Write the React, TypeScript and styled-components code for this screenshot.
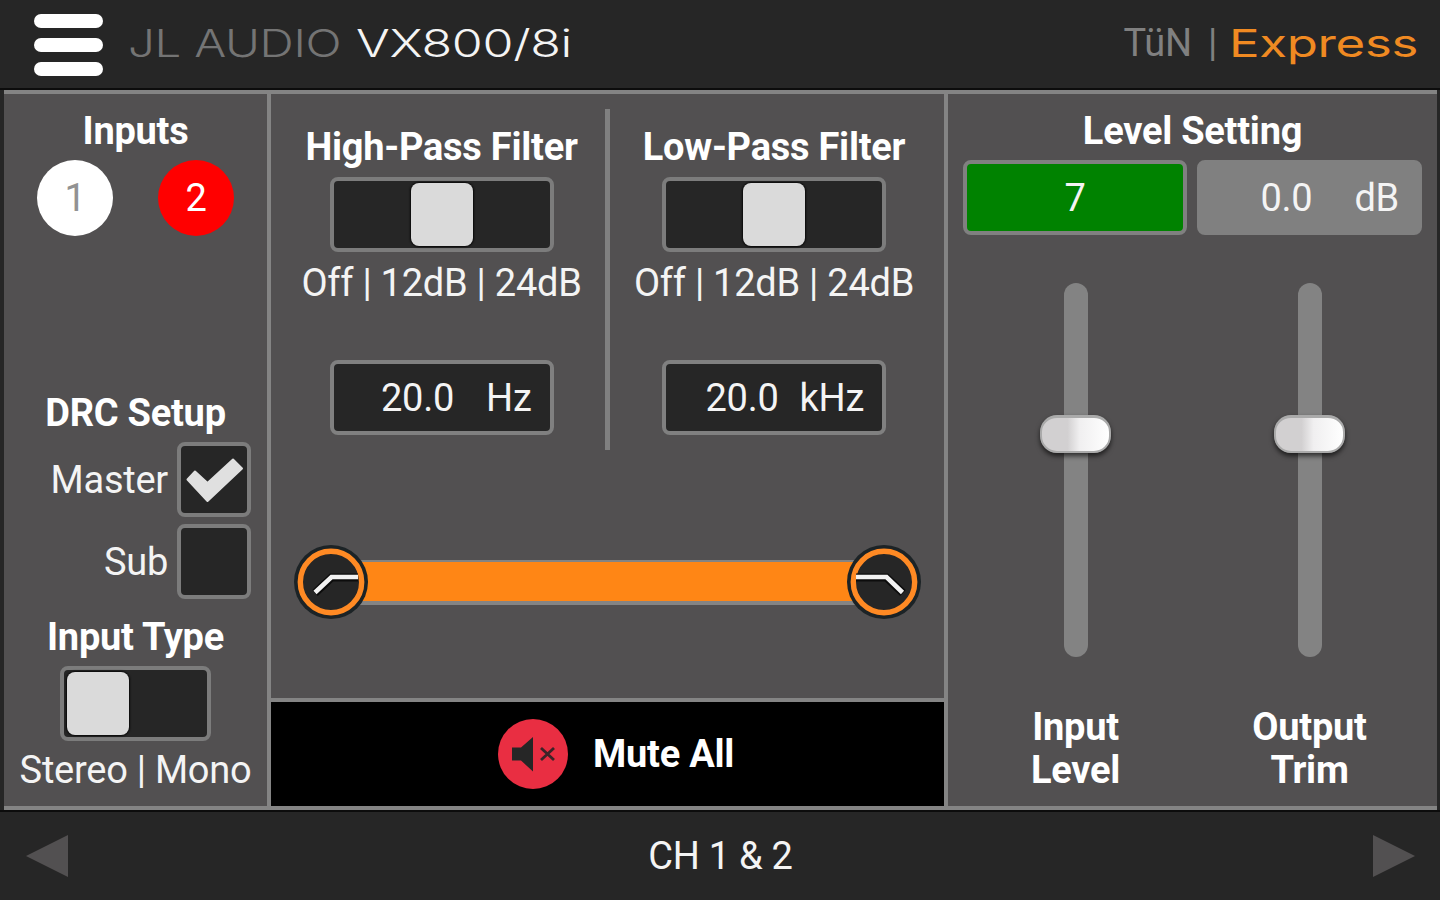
import styled, { createGlobalStyle } from "styled-components";

const GlobalStyle = createGlobalStyle`
  * {
    box-sizing: border-box;
  }

  body {
    margin: 0;
    background: #262626;
    color: #f4f4f4;
    font-family: Roboto, "Liberation Sans", sans-serif;
    font-size: 38px;
    line-height: 44px;
    letter-spacing: -0.25px;
  }
`;

const Screen = styled.div`
  display: grid;
  grid-template-rows: 90px 720px 90px;
  width: 1440px;
  height: 900px;
  overflow: hidden;
  white-space: nowrap;
`;

const Header = styled.header`
  display: flex;
  align-items: flex-start;
  padding: 14px 23px 0 34px;
  border-bottom: 2px solid #0c0c0c;
`;

const MenuButton = styled.div`
  display: grid;
  gap: 10px;
  width: 69px;
  margin-right: 25px;
`;

const MenuBar = styled.div`
  height: 14px;
  border-radius: 7px;
  background: #fff;
`;

const Wordmark = styled.div<{ $width: number; $color: string; $weight?: number }>`
  width: ${(p) => p.$width}px;
  margin-top: 7px;
  color: ${(p) => p.$color};
  font-family: Inter, sans-serif;
  font-weight: ${(p) => p.$weight ?? 300};
`;

const Stretch = styled.span<{ $scale: number }>`
  display: inline-block;
  transform: scaleX(${(p) => p.$scale});
  transform-origin: left center;
`;

const Mode = styled.div`
  margin: 7px 12px 0 auto;
  color: #808080;
  word-spacing: 7px;
`;

const Main = styled.main`
  display: grid;
  grid-template-columns: 263px 681px 489px;
  margin: 0 3px 0 4px;
  border: solid #848484;
  border-width: 4px 0;
  background: #525051;
`;

const Panel = styled.section`
  display: flex;
  flex-direction: column;
  align-items: center;
`;

const InputsPanel = styled(Panel)`
  padding-top: 15px;
`;

const FilterPanel = styled(Panel)`
  border: solid #848484;
  border-width: 0 4px;
`;

const LevelPanel = styled(Panel)`
  padding-top: 15px;
`;

const Title = styled.div`
  font-weight: 700;
  color: #fff;
  text-align: center;
`;

const Channels = styled.div`
  display: flex;
  gap: 45px;
  margin: 7px 0 155px;
`;

const Channel = styled.div<{ $bg: string; $color: string }>`
  width: 76px;
  height: 76px;
  border-radius: 50%;
  background: ${(p) => p.$bg};
  color: ${(p) => p.$color};
  line-height: 76px;
  text-align: center;
`;

const CheckRow = styled.label`
  display: flex;
  align-items: center;
  align-self: flex-end;
  gap: 9px;
  margin: 7px 16px 0 0;

  & + & {
    margin-bottom: 16px;
  }
`;

const CheckBox = styled.div`
  width: 74px;
  height: 75px;
  padding: 1px;
  border: 4px solid #7c7c7c;
  border-radius: 8px;
  background: #262626;

  svg {
    display: block;
  }
`;

const Switch = styled.div<{ $width: number; $position: string }>`
  display: flex;
  justify-content: ${(p) => p.$position};
  width: ${(p) => p.$width}px;
  height: 75px;
  margin: 7px 0;
  padding: 2px 3px;
  border: 4px solid #7c7c7c;
  border-radius: 8px;
  background: #262626;
`;

const FilterSwitch = styled(Switch)`
  margin: 8px 0 9px;
`;

const Knob = styled.div`
  width: 62px;
  height: 63px;
  border-radius: 8px;
  background: #dadada;
  box-shadow: 0 0 2px 1px #080808;
`;

const Filters = styled.div`
  display: grid;
  grid-template-columns: 334px 5px 334px;
  height: 604px;
  padding-top: 15px;
`;

const Divider = styled.div`
  height: 341px;
  background: #808080;
`;

const Filter = styled.div<{ $left?: number; $right?: number }>`
  display: flex;
  flex-direction: column;
  align-items: center;
  padding: 16px ${(p) => p.$right ?? 0}px 0 ${(p) => p.$left ?? 0}px;
`;

const Field = styled.div<{ $bg?: string; $width?: number; $end?: number }>`
  display: flex;
  justify-content: ${(p) => (p.$end ? "flex-end" : "center")};
  width: ${(p) => p.$width ?? 224}px;
  height: 75px;
  padding-right: ${(p) => p.$end ?? 0}px;
  border: 4px solid #808080;
  border-radius: 8px;
  background: ${(p) => p.$bg ?? "#262626"};
  line-height: 68px;
`;

const FilterField = styled(Field)`
  margin-top: 55px;
`;

const Unit = styled.span<{ $gap: number }>`
  margin-left: ${(p) => p.$gap}px;
`;

const Range = styled.div`
  display: flex;
  justify-content: space-between;
  align-items: center;
  width: 627px;
  height: 74px;
  margin: -153px 1px 79px 0;
`;

const RangeFill = styled.div`
  flex: 1;
  height: 45px;
  margin: 0 -8px;
  border: solid #848484;
  border-width: 2px 0 4px;
  background: #ff8615;
`;

const Handle = styled.svg`
  position: relative;
  flex: none;
`;

const MuteBar = styled.div`
  display: flex;
  align-items: center;
  width: 673px;
  height: 108px;
  padding-left: 227px;
  border-top: 4px solid #848484;
  background: #000;
`;

const MuteIcon = styled.svg`
  margin-right: 25px;
`;

const Readouts = styled.div`
  display: flex;
  gap: 10px;
  margin: 7px 0 48px;
`;

const Sliders = styled.div`
  display: grid;
  grid-template-columns: 234px 234px;
`;

const Slider = styled.div`
  display: flex;
  flex-direction: column;
  align-items: center;
`;

const Track = styled.div`
  display: flex;
  justify-content: center;
  width: 24px;
  height: 374px;
  margin-bottom: 49px;
  padding-top: 132px;
  border-radius: 12px;
  background: #838383;
`;

const Thumb = styled.div`
  flex: none;
  width: 71px;
  height: 38px;
  border: 2px solid #aaa;
  border-top-width: 3px;
  border-radius: 17px;
  background: linear-gradient(90deg, #d2d0d1 0 38%, #f0eff0 56%, #fff);
  box-shadow: 0 3px 5px rgba(0, 0, 0, 0.65);
`;

const Label = styled(Title)`
  line-height: 43px;
`;

const Footer = styled.footer`
  display: flex;
  justify-content: space-between;
  align-items: center;
  padding: 0 25px 0 26px;
  border-top: 2px solid #0c0c0c;
`;

const HighPassHandle = () => (
  <Handle width="74" height="74" viewBox="0 0 74 74">
    <circle cx="37" cy="37" r="37" fill="#1c2326" />
    <circle cx="37" cy="37" r="30.7" fill="#262626" stroke="#ff8a24" strokeWidth="5.4" />
    <path d="M21 48L37.5 32.5H64" fill="none" stroke="#0c0c0c" strokeWidth="8" />
    <path d="M21 47.5L37.5 32H64" fill="none" stroke="#f2f2f2" strokeWidth="4.6" />
  </Handle>
);

const LowPassHandle = () => (
  <Handle width="74" height="74" viewBox="0 0 74 74">
    <circle cx="37" cy="37" r="37" fill="#1c2326" />
    <circle cx="37" cy="37" r="30.7" fill="#262626" stroke="#ff8a24" strokeWidth="5.4" />
    <path d="M9 32.5H39.5L56 48" fill="none" stroke="#0c0c0c" strokeWidth="8" />
    <path d="M9 32H39.5L55.5 47.5" fill="none" stroke="#f2f2f2" strokeWidth="4.6" />
  </Handle>
);

const App = () => (
  <>
    <GlobalStyle />
    <Screen>
      <Header>
        <MenuButton>
          <MenuBar />
          <MenuBar />
          <MenuBar />
        </MenuButton>
        <Wordmark $width={228} $color="#747474">
          <Stretch $scale={1.25}>JL AUDIO</Stretch>
        </Wordmark>
        <Wordmark $width={214} $color="#f4f4f4">
          <Stretch $scale={1.32}>VX800/8i</Stretch>
        </Wordmark>
        <Mode>TüN |</Mode>
        <Wordmark $width={188} $color="#f08a22" $weight={400}>
          <Stretch $scale={1.34}>Express</Stretch>
        </Wordmark>
      </Header>

      <Main>
        <InputsPanel>
          <Title>Inputs</Title>
          <Channels>
            <Channel $bg="#fff" $color="#929292">1</Channel>
            <Channel $bg="#f00" $color="#fff">2</Channel>
          </Channels>
          <Title>DRC Setup</Title>
          <CheckRow>
            Master
            <CheckBox>
              <svg width="64" height="65" viewBox="0 0 64 65">
                <path
                  d="M5.5 32.5L13 24.5L25.5 36L51 12.5L60 21.5L25.5 54Z"
                  fill="#e0e0e0"
                  stroke="#e0e0e0"
                  strokeWidth="2"
                  strokeLinejoin="round"
                />
              </svg>
            </CheckBox>
          </CheckRow>
          <CheckRow>
            Sub
            <CheckBox />
          </CheckRow>
          <Title>Input Type</Title>
          <Switch $width={151} $position="flex-start">
            <Knob />
          </Switch>
          <div>Stereo | Mono</div>
        </InputsPanel>

        <FilterPanel>
          <Filters>
            <Filter $left={7}>
              <Title>High-Pass Filter</Title>
              <FilterSwitch $width={224} $position="center">
                <Knob />
              </FilterSwitch>
              <div>Off | 12dB | 24dB</div>
              <FilterField $end={18}>
                20.0<Unit $gap={32}>Hz</Unit>
              </FilterField>
            </Filter>
            <Divider />
            <Filter $right={6}>
              <Title>Low-Pass Filter</Title>
              <FilterSwitch $width={224} $position="center">
                <Knob />
              </FilterSwitch>
              <div>Off | 12dB | 24dB</div>
              <FilterField $end={18}>
                20.0<Unit $gap={21}>kHz</Unit>
              </FilterField>
            </Filter>
          </Filters>
          <Range>
            <HighPassHandle />
            <RangeFill />
            <LowPassHandle />
          </Range>
          <MuteBar>
            <MuteIcon width="70" height="70" viewBox="0 0 70 70">
              <circle cx="35" cy="35" r="35" fill="#e92e42" />
              <path d="M14 28.5H23L35 18V52.5L23 41.5H14Z" fill="#262626" />
              <path d="M43 29L56 41M56 29L43 41" stroke="#3c2428" strokeWidth="2.8" />
            </MuteIcon>
            <Title>Mute All</Title>
          </MuteBar>
        </FilterPanel>

        <LevelPanel>
          <Title>Level Setting</Title>
          <Readouts>
            <Field $bg="#008200">7</Field>
            <Field $bg="#808080" $width={225} $end={19}>
              0.0<Unit $gap={42}>dB</Unit>
            </Field>
          </Readouts>
          <Sliders>
            <Slider>
              <Track>
                <Thumb />
              </Track>
              <Label>
                Input
                <br />
                Level
              </Label>
            </Slider>
            <Slider>
              <Track>
                <Thumb />
              </Track>
              <Label>
                Output
                <br />
                Trim
              </Label>
            </Slider>
          </Sliders>
        </LevelPanel>
      </Main>

      <Footer>
        <svg width="42" height="42" viewBox="0 0 42 42">
          <path d="M0 21L42 0V42Z" fill="#525051" />
        </svg>
        <div>CH 1 &amp; 2</div>
        <svg width="42" height="42" viewBox="0 0 42 42">
          <path d="M42 21L0 0V42Z" fill="#525051" />
        </svg>
      </Footer>
    </Screen>
  </>
);

export default App;
